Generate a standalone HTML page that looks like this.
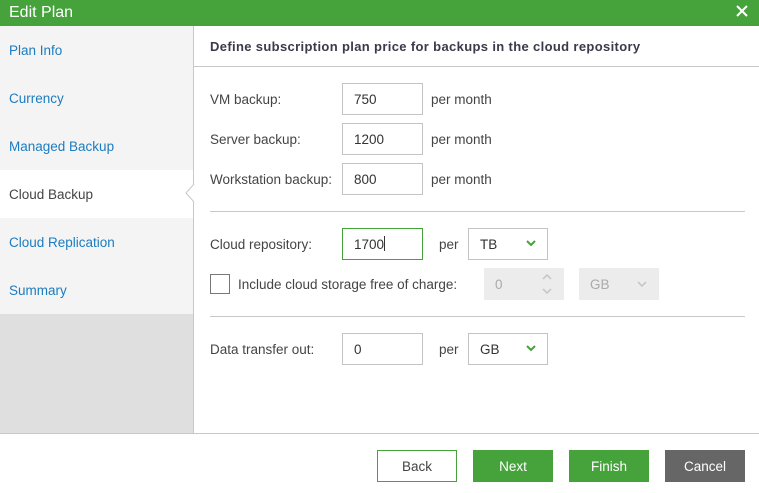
<!DOCTYPE html>
<html><head><meta charset="utf-8"><style>
*{margin:0;padding:0;box-sizing:border-box}
body{width:759px;height:493px;position:relative;overflow:hidden;background:#fff;font-family:"Liberation Sans",sans-serif;font-size:13.5px;color:#444}
.a{position:absolute}
.hdr{left:0;top:0;width:759px;height:26px;background:#46a33c;color:#fff;font-size:16px;line-height:25px;padding-left:9px}
.side{left:0;top:26px;width:193px;height:288px;background:#f4f4f4}
.grey{left:0;top:314px;width:193px;height:119px;background:#dfdfdf}
.vl{left:193px;top:26px;width:1px;height:407px;background:#c8c8c8}
.it{left:9px;color:#1c7cc0;font-size:13.5px}
.lbl{left:210px;font-size:13.5px;color:#444}
.inp{border:1px solid #c4c4c4;height:32px;width:81px;line-height:31px;padding-left:11px;font-size:13.5px;color:#333;background:#fff}
.hl{height:1px;background:#c8c8c8}
.btn{top:450px;width:80px;height:32px;line-height:33px;text-align:center;font-size:13.5px;color:#fff}
</style></head><body>
<div class="a hdr">Edit Plan</div>
<svg class="a" style="left:736px;top:5px" width="12" height="12"><path d="M1 1L11 11M11 1L1 11" stroke="#fff" stroke-width="2"/></svg>
<div class="a side"></div>
<div class="a grey"></div>
<div class="a" style="left:0;top:170px;width:194px;height:48px;background:#fff"></div>
<div class="a vl"></div>
<div class="a" style="left:194px;top:170px;width:1px;height:48px;background:#fff"></div>
<svg class="a" style="left:185px;top:184px" width="10" height="18"><path d="M9 0L1 9L9 18" fill="#fff" stroke="#c8c8c8" stroke-width="1"/></svg>
<div class="a it" style="top:43px">Plan Info</div>
<div class="a it" style="top:91px">Currency</div>
<div class="a it" style="top:139px">Managed Backup</div>
<div class="a it" style="top:187px;color:#444">Cloud Backup</div>
<div class="a it" style="top:235px">Cloud Replication</div>
<div class="a it" style="top:283px">Summary</div>

<div class="a" style="left:210px;top:39px;font-weight:bold;font-size:13px;color:#3a3a4a;letter-spacing:0.35px">Define subscription plan price for backups in the cloud repository</div>
<div class="a hl" style="left:194px;top:66px;width:565px"></div>

<div class="a lbl" style="top:92px">VM backup:</div>
<div class="a inp" style="left:342px;top:83px">750</div>
<div class="a lbl" style="left:431px;top:92px">per month</div>
<div class="a lbl" style="top:132px">Server backup:</div>
<div class="a inp" style="left:342px;top:123px">1200</div>
<div class="a lbl" style="left:431px;top:132px">per month</div>
<div class="a lbl" style="top:172px">Workstation backup:</div>
<div class="a inp" style="left:342px;top:163px">800</div>
<div class="a lbl" style="left:431px;top:172px">per month</div>
<div class="a hl" style="left:210px;top:211px;width:535px"></div>

<div class="a lbl" style="top:237px">Cloud repository:</div>
<div class="a inp" style="left:342px;top:228px;border-color:#46a33c">1700<span style="display:inline-block;width:1px;height:15px;background:#333;vertical-align:-2px"></span></div>
<div class="a lbl" style="left:439px;top:237px">per</div>
<div class="a inp" style="left:468px;top:228px;width:80px">TB</div>
<svg class="a" style="left:526px;top:240px" width="10" height="7"><path d="M1 1L5 5L9 1" fill="none" stroke="#46a33c" stroke-width="2"/></svg>

<div class="a" style="left:210px;top:274px;width:20px;height:20px;border:1px solid #777;background:#fff"></div>
<div class="a lbl" style="left:238px;top:277px">Include cloud storage free of charge:</div>
<div class="a" style="left:484px;top:268px;width:80px;height:32px;background:#ececec;color:#aaa;line-height:33px;padding-left:11px">0</div>
<svg class="a" style="left:541px;top:272px" width="12" height="24"><path d="M2 7L6 3L10 7M2 17L6 21L10 17" fill="none" stroke="#c4c4c4" stroke-width="1.5"/></svg>
<div class="a" style="left:579px;top:268px;width:80px;height:32px;background:#ececec;color:#aaa;line-height:33px;padding-left:11px">GB</div>
<svg class="a" style="left:637px;top:281px" width="10" height="7"><path d="M1 1L5 5L9 1" fill="none" stroke="#c4c4c4" stroke-width="1.5"/></svg>
<div class="a hl" style="left:210px;top:316px;width:535px"></div>

<div class="a lbl" style="top:342px">Data transfer out:</div>
<div class="a inp" style="left:342px;top:333px">0</div>
<div class="a lbl" style="left:439px;top:342px">per</div>
<div class="a inp" style="left:468px;top:333px;width:80px">GB</div>
<svg class="a" style="left:526px;top:345px" width="10" height="7"><path d="M1 1L5 5L9 1" fill="none" stroke="#46a33c" stroke-width="2"/></svg>

<div class="a hl" style="left:0;top:433px;width:759px"></div>
<div class="a btn" style="left:377px;border:1px solid #46a33c;color:#444;line-height:31px">Back</div>
<div class="a btn" style="left:473px;background:#46a33c">Next</div>
<div class="a btn" style="left:569px;background:#46a33c">Finish</div>
<div class="a btn" style="left:665px;background:#666">Cancel</div>
</body></html>
